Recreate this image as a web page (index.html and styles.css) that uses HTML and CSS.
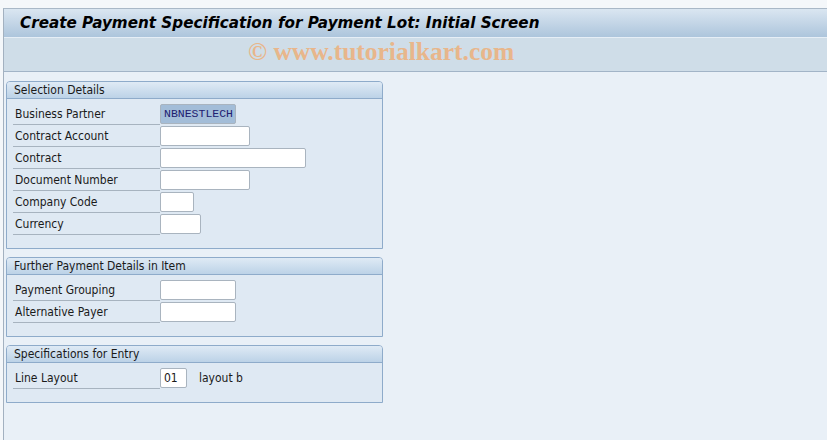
FILE: index.html
```html
<!DOCTYPE html>
<html lang="en">
<head>
  <meta charset="UTF-8" />
  <title>Create Payment Specification for Payment Lot</title>
  <link rel="stylesheet" href="styles.css">
</head>
<body>
<div class="frame">
  <div class="title-bar">Create Payment Specification for Payment Lot: Initial Screen</div>
  <div class="tool-band">© www.tutorialkart.com</div>

  <main class="screen">
    <section class="group">
      <div class="group-head">Selection Details</div>
      <div class="group-body">
        <div class="row"><label>Business Partner</label><span class="field field-filled w76">NBNESTLECH</span></div>
        <div class="row"><label>Contract Account</label><span class="field w90"></span></div>
        <div class="row"><label>Contract</label><span class="field w146"></span></div>
        <div class="row"><label>Document Number</label><span class="field w90"></span></div>
        <div class="row"><label>Company Code</label><span class="field w34"></span></div>
        <div class="row"><label>Currency</label><span class="field w41"></span></div>
      </div>
    </section>

    <section class="group">
      <div class="group-head">Further Payment Details in Item</div>
      <div class="group-body">
        <div class="row"><label>Payment Grouping</label><span class="field w76"></span></div>
        <div class="row"><label>Alternative Payer</label><span class="field w76"></span></div>
      </div>
    </section>

    <section class="group">
      <div class="group-head">Specifications for Entry</div>
      <div class="group-body">
        <div class="row"><label>Line Layout</label><span class="field w27">01</span><span class="hint">layout b</span></div>
      </div>
    </section>
  </main>
</div>
</body>
</html>
```

FILE: styles.css
```css
* {
  margin: 0;
  padding: 0;
  box-sizing: border-box;
}

body {
  background-color: #f4f7fa;
  font-family: 'DejaVu Sans Condensed', 'Liberation Sans', Arial, sans-serif;
  font-size: 12px;
  color: #1a1a1a;
  height: 440px;
  overflow: hidden;
}

.frame {
  margin: 8px 0 0 3px;
  border-left: 1px solid #a3b1c0;
  border-top: 1px solid #a9b8c7;
  height: 432px;
  background-color: #e9f0f7;
}

.title-bar {
  height: 29px;
  padding-left: 16px;
  line-height: 29px;
  font-family: 'DejaVu Sans', Verdana, sans-serif;
  font-weight: bold;
  font-style: italic;
  font-size: 15.2px;
  color: #000;
  background: linear-gradient(to bottom, #dae6f1, #adc5dc);
  border-bottom: 1px solid #e6eef6;
}

.tool-band {
  height: 34px;
  padding-left: 244px;
  line-height: 27px;
  font-family: 'Liberation Serif', 'Times New Roman', serif;
  font-weight: bold;
  font-size: 25.5px;
  color: #e8b68b;
  background-color: #cfdde8;
  border-bottom: 1px solid #a2b4c7;
}

.screen {
  display: flex;
  flex-direction: column;
  gap: 8px;
  padding: 9px 0 0 2px;
}

.group {
  width: 377px;
  border: 1px solid #8eabca;
  border-radius: 4px 4px 0 0;
  background-color: #dfe9f3;
}

.group-head {
  height: 17px;
  padding-left: 7px;
  line-height: 16px;
  background: linear-gradient(to bottom, #dfeaf5, #bcd2e7);
  border-bottom: 1px solid #8eabca;
  border-radius: 3px 3px 0 0;
}

.group-body {
  padding: 4px 0 13px 6px;
}

.row {
  display: flex;
  align-items: flex-start;
  height: 22px;
}

.row label {
  width: 147px;
  height: 22px;
  padding-left: 2px;
  line-height: 22px;
  border-bottom: 1px solid #a7b3bf;
}

.field {
  height: 20px;
  margin-top: 1px;
  padding-left: 3px;
  line-height: 18px;
  background-color: #fff;
  border: 1px solid #a9b4bf;
  border-radius: 2px;
}

.field-filled {
  background-color: #a3bdd8;
  color: #202070;
  font-family: 'Liberation Mono', 'Courier New', monospace;
  font-size: 11.5px;
}

.hint {
  margin-left: 12px;
  line-height: 22px;
}

.w27 { width: 27px; }
.w34 { width: 34px; }
.w41 { width: 41px; }
.w76 { width: 76px; }
.w90 { width: 90px; }
.w146 { width: 146px; }
```
